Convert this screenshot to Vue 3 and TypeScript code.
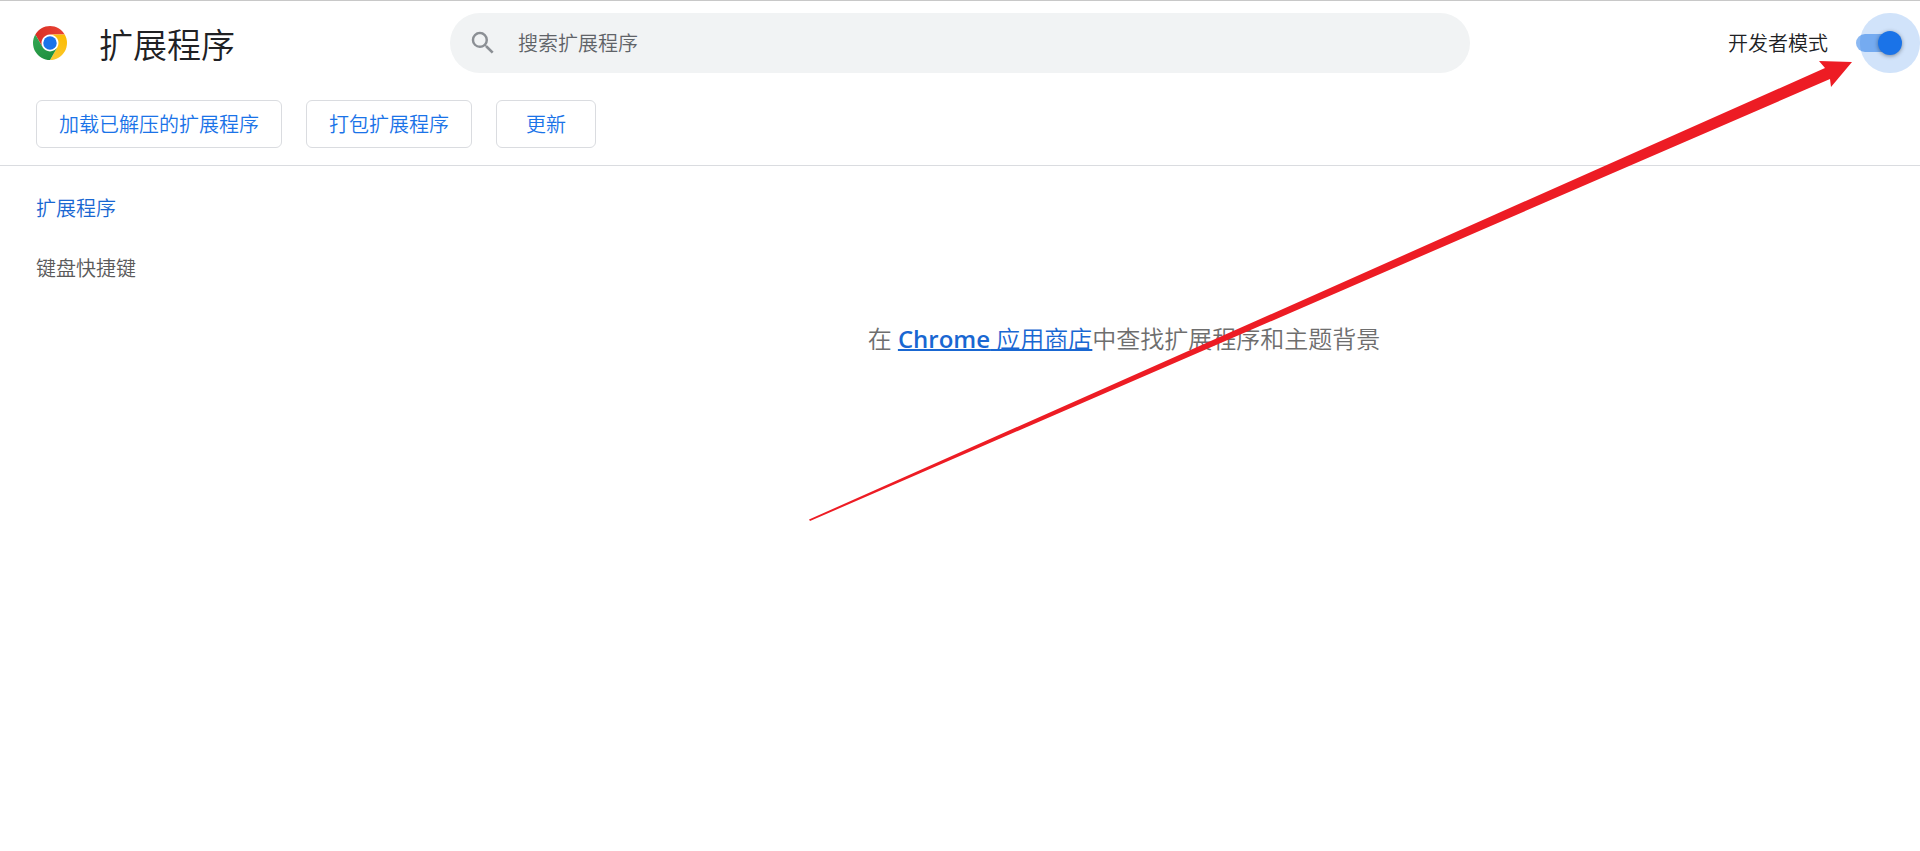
<script setup lang="ts">
import { ref } from 'vue'

interface MenuItem {
  label: string
  href: string
  active: boolean
}

const devMode = ref<boolean>(true)
const query = ref<string>('')
const actions: string[] = ['加载已解压的扩展程序', '打包扩展程序', '更新']
const menu: MenuItem[] = [
  { label: '扩展程序', href: '#extensions', active: true },
  { label: '键盘快捷键', href: '#shortcuts', active: false },
]
</script>

<template>
  <div class="page">
    <header class="toolbar">
      <div class="brand">
        <svg class="logo" viewBox="0 0 48 48" aria-hidden="true">
          <defs>
            <linearGradient id="red" x1="3.2" y1="15" x2="44.8" y2="15" gradientUnits="userSpaceOnUse">
              <stop offset="0" stop-color="#d93025" />
              <stop offset="1" stop-color="#ea4335" />
            </linearGradient>
            <linearGradient id="yellow" x1="20.7" y1="47.7" x2="41.5" y2="11.7" gradientUnits="userSpaceOnUse">
              <stop offset="0" stop-color="#fcc934" />
              <stop offset="1" stop-color="#fbbc04" />
            </linearGradient>
            <linearGradient id="green" x1="26.6" y1="46.5" x2="5.8" y2="10.5" gradientUnits="userSpaceOnUse">
              <stop offset="0" stop-color="#1e8e3e" />
              <stop offset="1" stop-color="#34a853" />
            </linearGradient>
          </defs>
          <circle cx="24" cy="24" r="12" fill="#fff" />
          <path fill="url(#red)" d="M24 12h20.78A24 24 0 0 0 3.22 12l10.39 18A12 12 0 0 1 24 12z" />
          <path fill="url(#yellow)" d="M34.39 30L24 48a24 24 0 0 0 20.78-36H24a12 12 0 0 1 10.39 18z" />
          <path fill="url(#green)" d="M13.61 30L3.22 12A24 24 0 0 0 24 48l10.39-18a12 12 0 0 1-20.78 0z" />
          <circle cx="24" cy="24" r="9.5" fill="#1a73e8" />
        </svg>
        <h1 class="title">扩展程序</h1>
      </div>

      <label class="search">
        <svg class="search-icon" viewBox="0 0 24 24" aria-hidden="true">
          <path
            fill="currentColor"
            d="M15.5 14h-.79l-.28-.27A6.471 6.471 0 0 0 16 9.5 6.5 6.5 0 1 0 9.5 16c1.61 0 3.09-.59 4.23-1.57l.27.28v.79l5 4.99L20.49 19l-4.99-5zm-6 0C7.01 14 5 11.99 5 9.5S7.01 5 9.5 5 14 7.01 14 9.5 11.99 14 9.5 14z"
          />
        </svg>
        <input v-model="query" class="search-input" type="search" placeholder="搜索扩展程序" aria-label="搜索扩展程序" />
      </label>

      <div class="dev">
        <label class="dev-label" for="dev-mode">开发者模式</label>
        <input id="dev-mode" v-model="devMode" class="toggle" type="checkbox" role="switch" />
      </div>
    </header>

    <div v-if="devMode" class="actions">
      <button v-for="action in actions" :key="action" class="action" type="button">{{ action }}</button>
    </div>

    <div class="body">
      <nav class="sidebar">
        <a v-for="item in menu" :key="item.href" :href="item.href" class="item" :class="{ active: item.active }">{{ item.label }}</a>
      </nav>
      <main class="main">
        <p class="message">在 <a href="#store" class="store"><span class="latin">Chrome</span> 应用商店</a>中查找扩展程序和主题背景</p>
      </main>
    </div>

    <svg class="arrow" viewBox="0 0 1043 460" aria-hidden="true">
      <path fill="#ed1c24" d="M0 458.500L1016 7L1010 0L1043 1L1022 26L1021 18L1 460z" />
    </svg>
  </div>
</template>

<style>
body {
  margin: 0;
  background: #fff;
}
</style>

<style scoped>
.page {
  position: relative;
  min-height: 100vh;
  box-sizing: border-box;
  border-top: 1px solid #c8c8c8;
  font-family: "Noto Sans", "Noto Sans CJK SC", sans-serif;
  font-size: 20px;
  font-weight: 350;
  line-height: 28px;
  color: #202124;
}

.toolbar {
  display: grid;
  grid-template-columns: minmax(240px, 1fr) minmax(0, 1020px) minmax(240px, 1fr);
  align-items: center;
  height: 84px;
}

.brand {
  display: flex;
  align-items: center;
  gap: 32px;
  padding-left: 33px;
}

.logo {
  width: 34px;
  height: 34px;
}

.title {
  margin: 0;
  padding-top: 4px;
  font-size: 34px;
  font-weight: 350;
  line-height: 44px;
}

.search {
  display: flex;
  align-items: center;
  gap: 20px;
  height: 60px;
  box-sizing: border-box;
  padding: 0 30px 0 18px;
  border-radius: 30px;
  background: #f1f3f4;
}

.search-icon {
  flex: none;
  width: 30px;
  height: 30px;
  color: #8b8f94;
}

.search-input {
  flex: 1;
  min-width: 0;
  padding: 2px 0 0;
  border: 0;
  outline: 0;
  background: transparent;
  font: inherit;
  color: #202124;
  appearance: none;
}

.search-input::placeholder {
  color: #5f6368;
  opacity: 1;
}

.dev {
  display: flex;
  align-items: center;
  justify-content: flex-end;
  gap: 28px;
  padding-right: 18px;
}

.dev-label {
  padding-top: 2px;
}

.toggle {
  position: relative;
  width: 46px;
  height: 18px;
  margin: 0;
  border-radius: 9px;
  background: #bdc1c6;
  appearance: none;
  cursor: pointer;
}

.toggle:checked {
  background: none;
}

.toggle:checked::before {
  content: "";
  position: absolute;
  top: 0;
  left: 0;
  width: 42px;
  height: 18px;
  border-radius: 9px;
  background: rgba(26, 115, 232, 0.5);
}

.toggle::after {
  content: "";
  position: absolute;
  top: -3px;
  left: 0;
  width: 24px;
  height: 24px;
  border-radius: 50%;
  background: #fff;
  box-shadow: 0 1px 4px rgba(0, 0, 0, 0.4);
}

.toggle:checked::after {
  left: auto;
  right: 0;
  background: #1a73e8;
  box-shadow: 0 1px 4px rgba(0, 0, 0, 0.4), 0 0 0 18px rgba(26, 115, 232, 0.2);
}

.actions {
  display: flex;
  gap: 24px;
  padding: 15px 36px 17px;
  border-bottom: 1px solid #dadce0;
}

.action {
  min-width: 100px;
  height: 48px;
  padding: 2px 22px 0;
  border: 1px solid #dadce0;
  border-radius: 6px;
  background: #fff;
  font: inherit;
  color: #1a73e8;
  cursor: pointer;
}

.body {
  display: flex;
}

.sidebar {
  display: flex;
  flex: none;
  flex-direction: column;
  width: 328px;
  box-sizing: border-box;
  padding: 13px 36px;
}

.item {
  line-height: 60px;
  color: #5a5a5a;
  text-decoration: none;
}

.item.active {
  color: #1967d2;
}

.main {
  flex: 1;
  padding-top: 155px;
}

.message {
  margin: 0;
  font-size: 24px;
  line-height: 36px;
  text-align: center;
  color: #6e6e6e;
}

.store {
  color: #1967d2;
  text-decoration: underline;
  text-decoration-thickness: 2px;
}

.latin {
  font-family: "Open Sans", sans-serif;
  font-weight: 600;
}

.arrow {
  position: absolute;
  top: 60px;
  right: 68px;
  width: 1043px;
  height: 460px;
  pointer-events: none;
}
</style>
